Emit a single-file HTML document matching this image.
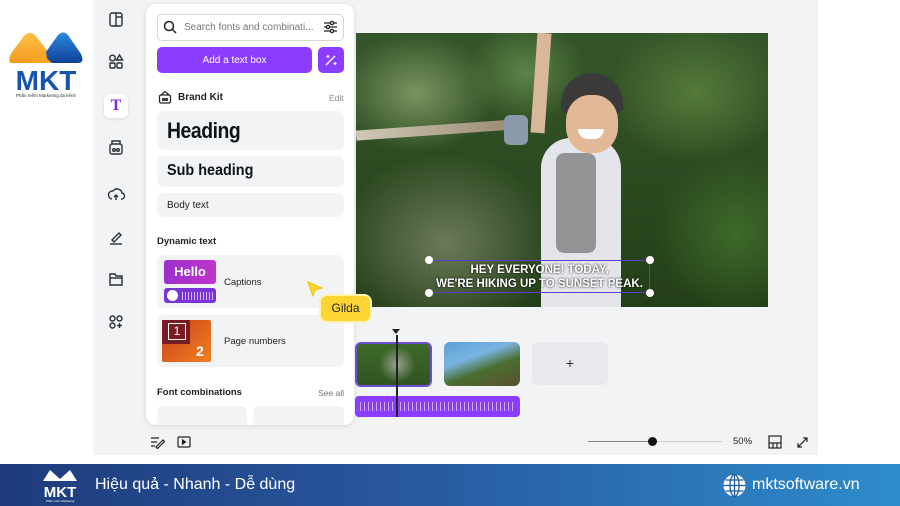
<!DOCTYPE html><html><head><meta charset="utf-8"><style>
*{margin:0;padding:0;box-sizing:border-box}
body{width:900px;height:506px;position:relative;overflow:hidden;background:#fff;font-family:"Liberation Sans",sans-serif;color:#0e1318}
.a{position:absolute}
.box{position:absolute;background:#f2f3f5;border-radius:7px}
</style></head><body>
<!-- MKT logo -->
<svg class="a" style="left:8px;top:30px" width="76" height="72" viewBox="0 0 76 72">
<defs><linearGradient id="og" x1="0" y1="0" x2="0" y2="1"><stop offset="0" stop-color="#ffc04a"/><stop offset="1" stop-color="#f39a1e"/></linearGradient>
<linearGradient id="bg" x1="0" y1="0" x2="0" y2="1"><stop offset="0" stop-color="#2d8be0"/><stop offset="1" stop-color="#0f3f96"/></linearGradient></defs>
<path d="M2 33 Q0 28 4 22 L16 6 Q21 0 27 5 L42 24 L40 33 Z" fill="url(#og)"/>
<path d="M38 22 L50 5 Q55 0 60 5 L73 24 Q77 33 70 33 L40 33 Z" fill="url(#bg)"/>
<path d="M22 33 Q32 20 44 33Z" fill="#f6a623"/>
<text x="38" y="60" text-anchor="middle" font-family="Liberation Sans" font-weight="900" font-size="28" fill="#1555b0">MKT</text>
<text x="38" y="67" text-anchor="middle" font-size="4.5" fill="#333">Phần mềm Marketing đa kênh</text>
</svg>
<!-- gray canvas -->
<div class="a" style="left:93px;top:0;width:725px;height:455px;background:#f2f3f5"></div>
<!-- sidebar icons -->
<svg class="a" style="left:106px;top:10px" width="20" height="330" fill="none" stroke="#2b2f36" stroke-width="1.4">
<rect x="4" y="3" width="12" height="13" rx="2"/><line x1="10" y1="3" x2="10" y2="16"/><line x1="10" y1="7" x2="16" y2="7"/>
<circle cx="6.5" cy="48" r="2.8"/><path d="M13.5 45 l3 5 h-6z"/><rect x="4" y="53" width="5" height="5" rx="1"/><rect x="11" y="53" width="5" height="5" rx="1"/>
<rect x="4" y="134" width="12" height="10" rx="2"/><path d="M6 134 v-3 h8 v3"/><circle cx="8" cy="140" r="1.3"/><circle cx="12" cy="140" r="1.3"/>
<path d="M6 189 a4 4 0 0 1 1-8 a5 5 0 0 1 9 2 a3 3 0 0 1 -1 6"/><path d="M10 190 v-5 m-2 2 l2-2 2 2"/>
<path d="M6 230 l7-7 2 2 -7 7z"/><line x1="4" y1="234" x2="16" y2="234"/>
<path d="M4 264 h5 l1 2 h6 v9 h-12z"/><line x1="4" y1="268" x2="16" y2="268"/>
<rect x="4" y="306" width="5" height="5" rx="2.5"/><rect x="11" y="306" width="5" height="5" rx="2.5"/><rect x="4" y="313" width="5" height="5" rx="2.5"/><path d="M13.5 313v5m-2.5-2.5h5"/>
</svg>
<div class="a" style="left:104px;top:94px;width:24px;height:24px;background:#fff;border-radius:6px;box-shadow:0 1px 3px rgba(0,0,0,.12);color:#7d2ae8;font:bold 16px 'Liberation Serif',serif;text-align:center;line-height:24px">T</div>
<!-- panel -->
<div class="a" style="left:146px;top:4px;width:208px;height:421px;background:#fff;border-radius:10px;box-shadow:0 1px 6px rgba(0,0,0,.12)"></div>
<div class="a" style="left:157px;top:14px;width:187px;height:27px;border:1px solid #d5d7db;border-radius:5px"></div>
<svg class="a" style="left:163px;top:20px" width="14" height="14" fill="none" stroke="#222" stroke-width="1.5"><circle cx="6" cy="6" r="4.5"/><line x1="9.5" y1="9.5" x2="13" y2="13"/></svg>
<div class="a" style="left:184px;top:22px;font-size:10px;color:#777">Search fonts and combinati...</div>
<svg class="a" style="left:323px;top:20px" width="15" height="14" fill="none" stroke="#222" stroke-width="1.3"><path d="M1 3h13M1 7h13M1 11h13"/><circle cx="9" cy="3" r="1.6" fill="#fff"/><circle cx="5" cy="7" r="1.6" fill="#fff"/><circle cx="9" cy="11" r="1.6" fill="#fff"/></svg>
<div class="a" style="left:157px;top:47px;width:155px;height:26px;background:#8b3dff;border-radius:5px;color:#fff;font-size:10px;text-align:center;line-height:27px">Add a text box</div>
<div class="a" style="left:318px;top:47px;width:26px;height:26px;background:#8b3dff;border-radius:5px"></div>
<svg class="a" style="left:324px;top:53px" width="14" height="14" fill="none" stroke="#fff" stroke-width="1.3"><path d="M2 12 L11 3"/><path d="M4 2v3M2.5 3.5h3M11 9v3M9.5 10.5h3"/></svg>
<svg class="a" style="left:158px;top:90px" width="14" height="14" fill="none" stroke="#222" stroke-width="1.2"><rect x="1.5" y="5" width="11" height="8" rx="1.5"/><path d="M3 5 L7 1.5 L11 5"/><circle cx="5.5" cy="9.5" r="1"/><circle cx="8.5" cy="9.5" r="1"/></svg>
<div class="a" style="left:178px;top:92px;font-size:10px;font-weight:bold;color:#222">Brand Kit</div>
<div class="a" style="left:329px;top:93px;font-size:8.5px;color:#888">Edit</div>
<div class="box" style="left:157px;top:111px;width:187px;height:39px"></div>
<div class="a" style="left:167px;top:118px;font-size:22px;font-weight:900;letter-spacing:-.5px;transform:scaleX(.88);transform-origin:left">Heading</div>
<div class="box" style="left:157px;top:156px;width:187px;height:31px"></div>
<div class="a" style="left:167px;top:162px;font-size:16px;font-weight:900;transform:scaleX(.9);transform-origin:left">Sub heading</div>
<div class="box" style="left:157px;top:193px;width:187px;height:24px"></div>
<div class="a" style="left:167px;top:200px;font-size:10px;color:#222">Body text</div>
<div class="a" style="left:157px;top:236px;font-size:9.5px;font-weight:bold;color:#222">Dynamic text</div>
<div class="box" style="left:157px;top:255px;width:187px;height:53px"></div>
<div class="a" style="left:164px;top:260px;width:52px;height:24px;background:linear-gradient(90deg,#9a2fd0,#c035c8);border-radius:3px;color:#fff;font-size:13px;text-align:center;line-height:24px;font-weight:bold">Hello</div>
<div class="a" style="left:164px;top:288px;width:52px;height:15px;background:#7a35d8;border-radius:3px"></div>
<div class="a" style="left:167px;top:290px;width:11px;height:11px;background:#fff;border-radius:50%"></div>
<div class="a" style="left:182px;top:292px;width:32px;height:8px;background:repeating-linear-gradient(90deg,#d8b8ff 0 1px,transparent 1px 3px)"></div>
<div class="a" style="left:224px;top:277px;font-size:9.5px;color:#222">Captions</div>
<div class="box" style="left:157px;top:315px;width:187px;height:52px"></div>
<div class="a" style="left:162px;top:320px;width:49px;height:42px;background:linear-gradient(135deg,#c9401a,#f08020);border-radius:2px"></div>
<div class="a" style="left:162px;top:320px;width:28px;height:24px;background:#7a1b24"></div>
<div class="a" style="left:168px;top:323px;width:18px;height:17px;border:1px solid #fff;color:#fff;font-size:12px;text-align:center;line-height:15px">1</div>
<div class="a" style="left:196px;top:343px;color:#fff;font-size:14px;font-weight:bold">2</div>
<div class="a" style="left:224px;top:336px;font-size:9.5px;color:#222">Page numbers</div>
<div class="a" style="left:157px;top:387px;font-size:9.5px;font-weight:bold;color:#222">Font combinations</div>
<div class="a" style="left:318px;top:388px;font-size:8.5px;color:#777">See all</div>
<div class="box" style="left:157px;top:406px;width:90px;height:19px;border-radius:5px 5px 0 0"></div>
<div class="box" style="left:253px;top:406px;width:91px;height:19px;border-radius:5px 5px 0 0"></div>
<!-- photo -->
<div class="a" style="left:356px;top:33px;width:412px;height:274px;overflow:hidden;background:
radial-gradient(ellipse 80px 60px at 60px 60px,#7a9460,transparent),
radial-gradient(ellipse 90px 70px at 340px 60px,#557a3a,transparent),
radial-gradient(ellipse 110px 90px at 90px 210px,#6c7a58,transparent),
radial-gradient(ellipse 80px 80px at 380px 200px,#3e6a2a,transparent),
radial-gradient(ellipse 60px 50px at 170px 40px,#5e8448,transparent),
linear-gradient(180deg,#35562a,#243f18)">
<div class="a" style="left:0;top:92px;width:160px;height:10px;background:linear-gradient(90deg,#d0c8b8,#9a8a70);transform:rotate(-4deg)"></div>
<div class="a" style="left:178px;top:0;width:14px;height:100px;background:#d8b898;transform:rotate(4deg)"></div>
<div class="a" style="left:148px;top:82px;width:24px;height:30px;background:#8b9aa8;border-radius:6px"></div>
<div class="a" style="left:185px;top:105px;width:80px;height:170px;background:#e4e5ea;border-radius:30px 30px 0 0"></div>
<div class="a" style="left:200px;top:120px;width:40px;height:100px;background:#444;opacity:.5;border-radius:8px"></div>
<div class="a" style="left:205px;top:40px;width:62px;height:40px;background:#3a3a3a;border-radius:31px 31px 6px 6px"></div>
<div class="a" style="left:210px;top:62px;width:52px;height:58px;background:#e3b896;border-radius:45%"></div>
<div class="a" style="left:222px;top:96px;width:26px;height:10px;background:#fff;border-radius:0 0 12px 12px"></div>
</div>
<!-- caption -->
<div class="a" style="left:429px;top:260px;width:221px;height:33px;border:1.5px solid #5b3fc4"></div>
<div class="a" style="left:429px;top:263px;width:221px;text-align:center;color:#fff;font-size:11.5px;font-weight:bold;line-height:14px;text-shadow:0 0 2px #000">HEY EVERYONE! TODAY,<br>WE'RE HIKING UP TO SUNSET PEAK.</div>
<div class="a" style="left:425px;top:256px;width:8px;height:8px;background:#fff;border-radius:50%"></div>
<div class="a" style="left:646px;top:256px;width:8px;height:8px;background:#fff;border-radius:50%"></div>
<div class="a" style="left:425px;top:289px;width:8px;height:8px;background:#fff;border-radius:50%"></div>
<div class="a" style="left:646px;top:289px;width:8px;height:8px;background:#fff;border-radius:50%"></div>
<!-- cursor & gilda -->
<svg class="a" style="left:306px;top:280px" width="18" height="18"><path d="M2 2 L16 8 L9 10 L7 16Z" fill="#fcd535" stroke="#f5c000"/></svg>
<div class="a" style="left:321px;top:296px;width:49px;height:25px;background:#fcd535;border-radius:6px;box-shadow:0 0 0 2px #fff3b0;font-size:12px;text-align:center;line-height:25px;color:#222">Gilda</div>
<!-- timeline -->
<svg class="a" style="left:392px;top:328px" width="9" height="7"><path d="M0 1 h8 L4 6z" fill="#222"/></svg>
<div class="a" style="left:355px;top:342px;width:77px;height:45px;border:2px solid #6b4fd0;border-radius:6px;background:radial-gradient(circle at 55% 50%,#9aa08e,transparent 40%),linear-gradient(#3e6a2a,#2f5420)"></div>
<div class="a" style="left:444px;top:342px;width:76px;height:44px;border-radius:6px;background:linear-gradient(160deg,#5aa0d8 0%,#7ab4e0 35%,#4a6e30 60%,#5a5030)"></div>
<div class="a" style="left:532px;top:342px;width:76px;height:43px;border-radius:6px;background:#e8e9ec;text-align:center;line-height:43px;font-size:14px;color:#333">+</div>
<div class="a" style="left:355px;top:396px;width:165px;height:21px;border-radius:4px;background:#8b3dff"></div>
<div class="a" style="left:360px;top:402px;width:156px;height:9px;background:repeating-linear-gradient(90deg,#e2c8ff 0 1px,transparent 1px 4px);opacity:.8"></div>
<div class="a" style="left:396px;top:335px;width:1.5px;height:82px;background:#222"></div>
<!-- bottom bar -->
<svg class="a" style="left:150px;top:435px" width="44" height="14" fill="none" stroke="#222" stroke-width="1.2"><path d="M1 3h8M1 7h6M1 11h4M6 12 L13 5 l1.5 1.5 -7 7z"/><rect x="28" y="2" width="12" height="10" rx="1"/><path d="M32.5 5v4l3-2z" fill="#222"/></svg>
<div class="a" style="left:588px;top:441px;width:134px;height:1px;background:#ccc"></div>
<div class="a" style="left:588px;top:441px;width:64px;height:1px;background:#888"></div>
<div class="a" style="left:648px;top:437px;width:9px;height:9px;border-radius:50%;background:#111"></div>
<div class="a" style="left:733px;top:436px;font-size:9.5px;color:#222">50%</div>
<svg class="a" style="left:768px;top:435px" width="42" height="14" fill="none" stroke="#222" stroke-width="1.2"><rect x="1" y="1" width="12" height="12"/><path d="M1 8h12M5 8v5M9 8v5"/><path d="M30 12l9-9M35 3h4v4M30 8v4h4"/></svg>
<!-- footer -->
<div class="a" style="left:0;top:464px;width:900px;height:42px;background:linear-gradient(90deg,#1e3b7c,#28589e 45%,#2e8ccc)"></div>
<svg class="a" style="left:40px;top:467px" width="40" height="36"><path d="M3 14 L10 3 L20 12 L30 3 L37 14 Z" fill="#fff"/><text x="20" y="30" text-anchor="middle" font-weight="900" font-size="15" fill="#fff" font-family="Liberation Sans">MKT</text><text x="20" y="35" text-anchor="middle" font-size="3" fill="#fff">Phần mềm Marketing</text></svg>
<div class="a" style="left:95px;top:476px;font-size:16px;color:#fff">Hiệu quả - Nhanh - Dễ dùng</div>
<svg class="a" style="left:723px;top:474px" width="23" height="23" fill="none" stroke="#1f5aa0" stroke-width="1.3"><circle cx="11.5" cy="11.5" r="11" fill="#fff" stroke="none"/><ellipse cx="11.5" cy="11.5" rx="4.5" ry="11"/><path d="M0.5 11.5h22M11.5 0.5v22M2.5 6h18M2.5 17h18"/></svg>
<div class="a" style="left:752px;top:476px;font-size:16px;color:#fff">mktsoftware.vn</div>
</body></html>
